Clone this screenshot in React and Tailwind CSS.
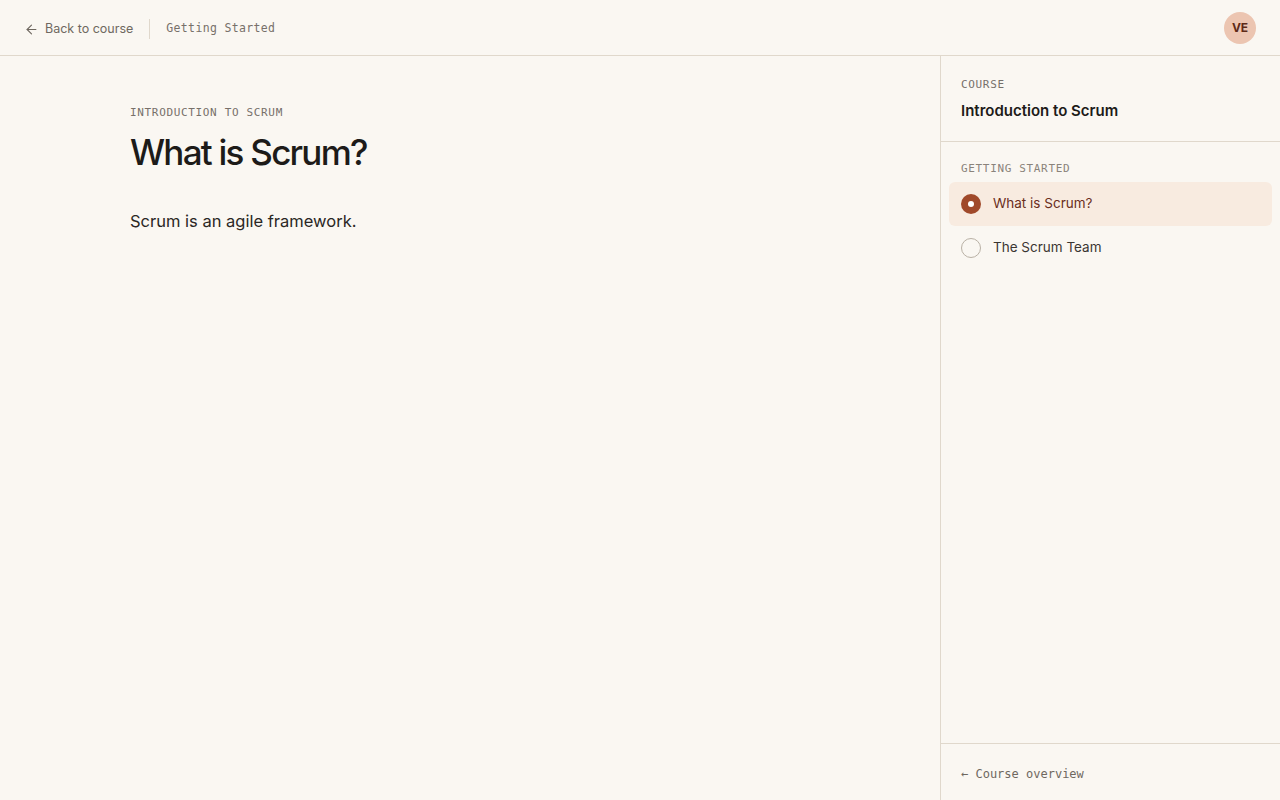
import { ArrowLeft } from "lucide-react";

const sans = "font-['Inter','Lato',sans-serif]";
const mono = "font-['DejaVu_Sans_Mono','Liberation_Mono',monospace]";

function LessonItem({ title, active }) {
  return (
    <div
      className={`flex h-11 items-center gap-3 rounded-md px-3 ${active ? "bg-[#f8ebe0]" : ""}`}
    >
      {active ? (
        <span className="flex h-5 w-5 items-center justify-center rounded-full bg-[#a0492a]">
          <span className="h-1.5 w-1.5 rounded-full bg-white" />
        </span>
      ) : (
        <span className="h-5 w-5 rounded-full border border-[#b9b1a5]" />
      )}
      <span className={`text-[13.5px] ${active ? "text-[#6a2e1c]" : "text-[#3a3632]"}`}>{title}</span>
    </div>
  );
}

export default function App() {
  return (
    <div className={`flex h-screen flex-col bg-[#faf7f2] text-[#1d1b19] ${sans}`}>
      <header className="flex h-14 shrink-0 items-center justify-between border-b border-[#e0d8cc] px-6">
        <div className="flex items-center pt-[3px]">
          <a className="flex items-center gap-1.5 text-[12.5px] text-[#6f6860]">
            <ArrowLeft size={15} strokeWidth={1.8} />
            Back to course
          </a>
          <span className="ml-4 mr-4 h-5 w-px bg-[#e0d8cc]" />
          <span className={`${mono} text-[11.5px] tracking-[0.03em] text-[#77706a]`}>Getting Started</span>
        </div>
        <div className="flex h-8 w-8 items-center justify-center rounded-full bg-[#ecc5b1] text-[12px] font-bold text-[#5e2a18]">
          VE
        </div>
      </header>

      <div className="flex min-h-0 flex-1">
        <main className="flex-1 px-[130px] pt-[49px]">
          <p className={`${mono} text-[11px] tracking-[0.06em] text-[#77706a]`}>INTRODUCTION TO SCRUM</p>
          <h1 className="mt-[9px] text-[35px] font-medium leading-tight tracking-[-0.05em] text-[#1d1b19]">
            What is Scrum?
          </h1>
          <p className="mt-[35px] text-[16.5px] text-[#2a2724]">Scrum is an agile framework.</p>
        </main>

        <aside className="flex w-[340px] shrink-0 flex-col border-l border-[#e0d8cc]">
          <div className="border-b border-[#e0d8cc] px-5 pb-[19px] pt-[21px]">
            <p className={`${mono} text-[11px] tracking-[0.06em] text-[#77706a]`}>COURSE</p>
            <p className="mt-1.5 text-[15px] font-semibold text-[#1d1b19]">Introduction to Scrum</p>
          </div>
          <div className="flex-1 px-2 pt-[19px]">
            <p className={`${mono} px-3 pb-1 text-[11px] tracking-[0.06em] text-[#8a837b]`}>GETTING STARTED</p>
            <LessonItem title="What is Scrum?" active />
            <LessonItem title="The Scrum Team" />
          </div>
          <div className="flex h-[57px] items-center border-t border-[#e0d8cc] px-5 pt-1">
            <span className={`${mono} text-[12px] text-[#6f6860]`}>← Course overview</span>
          </div>
        </aside>
      </div>
    </div>
  );
}
